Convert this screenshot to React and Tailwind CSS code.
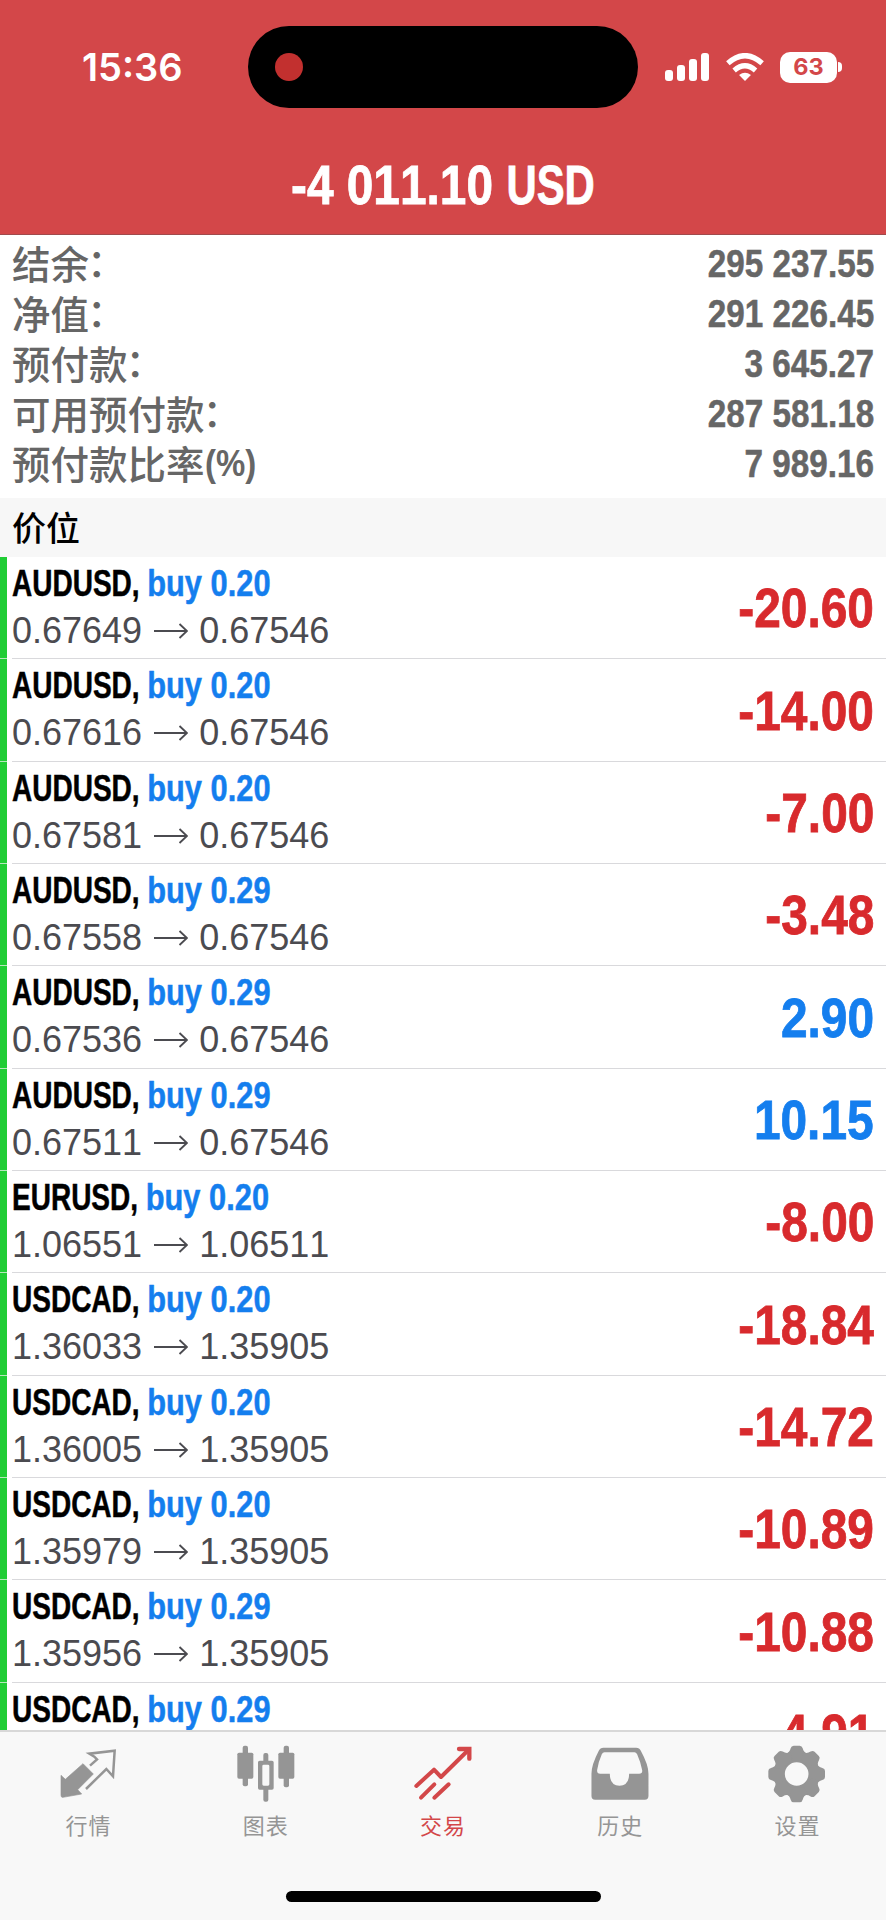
const summary = [
  { label: '结余', colon: true, value: '295 237.55' },
  { label: '净值', colon: true, value: '291 226.45' },
  { label: '预付款', colon: true, value: '3 645.27' },
  { label: '可用预付款', colon: true, value: '287 581.18' },
  { label: '预付款比率', suffix: '(%)', value: '7 989.16' },
];

const positions = [
  { symbol: 'AUDUSD', side: 'buy', volume: '0.20', open: '0.67649', current: '0.67546', profit: '-20.60' },
  { symbol: 'AUDUSD', side: 'buy', volume: '0.20', open: '0.67616', current: '0.67546', profit: '-14.00' },
  { symbol: 'AUDUSD', side: 'buy', volume: '0.20', open: '0.67581', current: '0.67546', profit: '-7.00' },
  { symbol: 'AUDUSD', side: 'buy', volume: '0.29', open: '0.67558', current: '0.67546', profit: '-3.48' },
  { symbol: 'AUDUSD', side: 'buy', volume: '0.29', open: '0.67536', current: '0.67546', profit: '2.90' },
  { symbol: 'AUDUSD', side: 'buy', volume: '0.29', open: '0.67511', current: '0.67546', profit: '10.15' },
  { symbol: 'EURUSD', side: 'buy', volume: '0.20', open: '1.06551', current: '1.06511', profit: '-8.00' },
  { symbol: 'USDCAD', side: 'buy', volume: '0.20', open: '1.36033', current: '1.35905', profit: '-18.84' },
  { symbol: 'USDCAD', side: 'buy', volume: '0.20', open: '1.36005', current: '1.35905', profit: '-14.72' },
  { symbol: 'USDCAD', side: 'buy', volume: '0.20', open: '1.35979', current: '1.35905', profit: '-10.89' },
  { symbol: 'USDCAD', side: 'buy', volume: '0.29', open: '1.35956', current: '1.35905', profit: '-10.88' },
  { symbol: 'USDCAD', side: 'buy', volume: '0.29', open: '1.35926', current: '1.35905', profit: '-4.91' },
];

function QuotesIcon() {
  return (
    <svg viewBox="176 250 180 180" className="w-[60px] h-[60px]">
      <path d="M248 312 L279 343 L232 390 L244 403 L188 413 Q182 414 182 407 L182 347 L195 359 Z" fill="currentColor" stroke="currentColor" strokeWidth="2" strokeLinejoin="round" />
      <path d="M269 318 L290 299 L282 291 L267 282 L343 273 L338 350 L318 328 L257 388" fill="none" stroke="currentColor" strokeWidth="7.5" />
    </svg>
  );
}

function ChartIcon() {
  return (
    <svg viewBox="707 250 180 180" className="w-[60px] h-[60px]" fill="currentColor">
      <rect x="727" y="258" width="16" height="122" rx="6" />
      <rect x="711" y="279" width="48" height="78" rx="5" />
      <rect x="850" y="258" width="16" height="125" rx="6" />
      <rect x="834" y="279" width="48" height="78" rx="5" />
      <rect x="789" y="280" width="15" height="30" rx="6" />
      <rect x="789" y="382" width="15" height="44" rx="6" />
      <path fillRule="evenodd" d="M778 303h37q5 0 5 5v77q0 5-5 5h-37q-5 0-5-5v-77q0-5 5-5ZM790 315q-4 0-4 4v55q0 4 4 4h13q4 0 4-4v-55q0-4-4-4Z" />
    </svg>
  );
}

function TradeIcon() {
  return (
    <svg viewBox="339 250 180 180" className="w-[60px] h-[60px]" fill="none" stroke="currentColor" strokeWidth="12" strokeLinecap="round">
      <path d="M349 379 L402 330 L423 352 L505 271" strokeLinejoin="round" />
      <path d="M477 268 H508 V297" strokeWidth="13" />
      <path d="M363 414 L403 374M403 414 L446 374" />
    </svg>
  );
}

function HistoryIcon() {
  return (
    <svg viewBox="12.6 250 180 180" className="w-[60px] h-[60px]" fill="currentColor">
      <path
        fillRule="evenodd"
        d="M53 264H151Q161 264 165 273Q188 315 188 342V409Q188 420 177 420H28Q17 420 17 409V342Q17 315 39 273Q43 264 53 264ZM56 278Q51 278 48 284Q38 306 34 331Q33 342 43 342H72Q72 378 101 378Q130 378 130 342H160Q171 342 169 331Q164 306 154 284Q151 278 146 278Z"
      />
    </svg>
  );
}

const TEETH = [0, 45, 90, 135, 180, 225, 270, 315];

function SettingsIcon() {
  return (
    <svg viewBox="544 250 180 180" className="w-[60px] h-[60px]" fill="currentColor">
      <circle cx="633" cy="343" r="52" fill="none" stroke="currentColor" strokeWidth="33" />
      {TEETH.map((a) => (
        <path key={a} d="M600 283 Q612 279 615 266 Q617 258 624 258 H642 Q649 258 651 266 Q654 279 666 283 L655 302 H611 Z" transform={`rotate(${a} 633 343)`} />
      ))}
    </svg>
  );
}

function ArrowIcon() {
  return (
    <svg viewBox="0 0 34 16" className="w-[34px] h-4" fill="none" stroke="currentColor" strokeWidth="1.9">
      <path d="M0 8H33M25.5 1L33 8L25.5 15" />
    </svg>
  );
}

const tabs = [
  { label: '行情', icon: QuotesIcon },
  { label: '图表', icon: ChartIcon },
  { label: '交易', icon: TradeIcon, active: true },
  { label: '历史', icon: HistoryIcon },
  { label: '设置', icon: SettingsIcon },
];

function StatusBar() {
  return (
    <div className="relative h-[134px]">
      <div className="flex items-center h-full pl-[82px] pr-[44px]">
        <span className="font-['Inter',sans-serif] font-semibold text-[38px] leading-none text-white">15:36</span>
        <div className="ml-auto flex items-center">
          <div className="flex items-end gap-1 h-7">
            <div className="w-2 h-[11px] rounded-[3px] bg-white" />
            <div className="w-2 h-4 rounded-[3px] bg-white" />
            <div className="w-2 h-[22px] rounded-[3px] bg-white" />
            <div className="w-2 h-7 rounded-[3px] bg-white" />
          </div>
          <svg viewBox="848 155 114 85" className="w-[38px] h-7 ml-[17px]" fill="none" stroke="white" strokeWidth="16">
            <path d="M853 186 Q905 140 957 186" />
            <path d="M872 208 Q905 180 937 208" />
            <path d="M905 240 L887 222 Q905 208 923 222 Z" fill="white" stroke="none" />
          </svg>
          <div className="flex items-center justify-center w-[57px] h-[31px] ml-4 rounded-[10px] bg-white">
            <span className="font-['Inter',sans-serif] font-bold text-[23.5px] leading-none text-[#d34749]">63</span>
          </div>
          <div className="w-1 h-[10px] ml-px rounded-r-full bg-white" />
        </div>
      </div>
      <div className="absolute left-[248px] top-[26px] w-[390px] h-[82px] rounded-full bg-black flex items-center pl-[27px]">
        <div className="w-7 h-7 rounded-full bg-[#c2302f]" />
      </div>
    </div>
  );
}

function PositionRow({ symbol, side, volume, open, current, profit }) {
  const loss = profit.startsWith('-');
  return (
    <div className="flex h-[102.35px] shrink-0">
      <div className="w-[7px] bg-[#20cd35] border-b border-[#b5e8bb]" />
      <div className="flex flex-1 ml-[5px] pr-3 border-b border-[#d9d9dc]">
        <div className="pt-[6px]">
          <div className="flex w-0 h-10 leading-10 text-[37.5px] font-bold whitespace-pre origin-left scale-x-[0.747] [-webkit-text-stroke:0.5px]">
            <span className="text-black">{symbol}, </span>
            <span className="text-[#147eee] origin-left scale-x-[1.1]">{side} {volume}</span>
          </div>
          <div className="flex items-center mt-2 h-10 leading-10 text-[36px] text-[#4b4b50]">
            <span>{open}</span>
            <span className="flex justify-center w-[57px]"><ArrowIcon /></span>
            <span>{current}</span>
          </div>
        </div>
        <div className={`ml-auto mt-[2px] self-center text-[55px] leading-none font-bold origin-right scale-x-[0.87] [-webkit-text-stroke:0.8px] ${loss ? 'text-[#d82a2d]' : 'text-[#147eee]'}`}>
          {profit}
        </div>
      </div>
    </div>
  );
}

export default function App() {
  return (
    <div className="flex flex-col w-[886px] h-[1920px] overflow-hidden bg-white [font-kerning:none] font-['Liberation_Sans','Noto_Sans_CJK_SC',sans-serif]">
      <header className="h-[235px] shrink-0 bg-[#d34749] border-b border-[#a04a4c]">
        <StatusBar />
        <h1 className="flex ml-[291px] h-[101px] leading-[102px] text-[55px] font-bold text-white whitespace-pre origin-left scale-x-[0.869] w-0 [-webkit-text-stroke:0.8px]">
          <span>-4 011.10 </span>
          <span className="origin-left scale-x-[0.875]">USD</span>
        </h1>
      </header>

      {/* Account summary */}
      <section className="h-[263px] shrink-0 pt-1 px-3 text-[#666666]">
        {summary.map((row) => (
          <div key={row.label} className="flex items-center h-[50px]">
            <span className="font-['Noto_Sans_CJK_SC',sans-serif] font-medium text-[38.5px] leading-[46px] pb-1">
              {row.label}
              {row.colon && <span className="-ml-[2px] font-['Noto_Sans_CJK_TC',sans-serif] [font-feature-settings:'halt']">：</span>}
            </span>
            {row.suffix && (
              <span className="font-bold text-[37px] leading-[50px] whitespace-pre origin-left scale-x-[0.89]">{row.suffix}</span>
            )}
            <span className="ml-auto text-[38px] leading-[51px] font-bold origin-right scale-x-[0.875] [-webkit-text-stroke:0.5px]">{row.value}</span>
          </div>
        ))}
      </section>

      <div className="flex items-center h-[59px] shrink-0 px-3 pb-[2px] bg-[#f7f7f7] text-black font-['Noto_Sans_CJK_SC',sans-serif] font-medium text-[34px] leading-none">
        价位
      </div>

      {/* Open positions */}
      <main className="flex-1 min-h-0 overflow-hidden flex flex-col">
        {positions.map((p, i) => (
          <PositionRow key={i} {...p} />
        ))}
      </main>

      <nav className="h-[190px] shrink-0 flex flex-col bg-[#f8f8f8] border-t-2 border-[#d8d8d8]">
        <div className="grid grid-cols-5 pt-[11px]">
          {tabs.map(({ label, icon: Icon, active }) => (
            <div key={label} className={`flex flex-col items-center ${active ? 'text-[#d34749]' : 'text-[#959595]'}`}>
              <Icon />
              <span className="mt-[5px] font-['Noto_Sans_CJK_SC',sans-serif] text-[22px] leading-[32px] tracking-[1px]">{label}</span>
            </div>
          ))}
        </div>
        <div className="mt-auto mb-[18px] mx-auto w-[315px] h-[11px] rounded-full bg-black" />
      </nav>
    </div>
  );
}
